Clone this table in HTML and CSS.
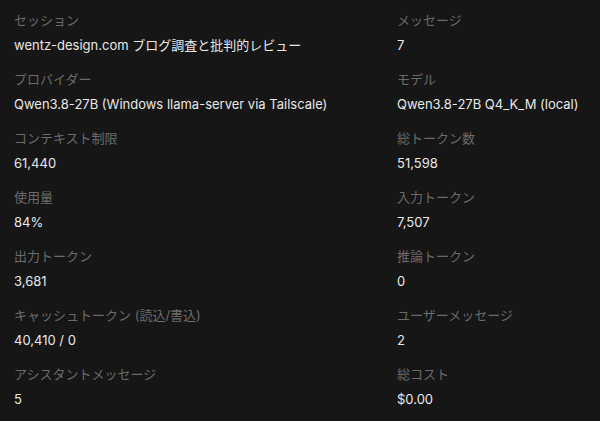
FILE: index.html
```html
<!DOCTYPE html>
<html lang="ja">
<head>
<meta charset="utf-8">
<link rel="stylesheet" href="styles.css">
</head>
<body>
<div class="stats">
  <div class="item"><div class="label">セッション</div><div class="value">wentz-design.com ブログ調査と批判的レビュー</div></div>
  <div class="item"><div class="label">メッセージ</div><div class="value">7</div></div>
  <div class="item"><div class="label">プロバイダー</div><div class="value">Qwen3.8-27B (Windows llama-server via Tailscale)</div></div>
  <div class="item"><div class="label">モデル</div><div class="value">Qwen3.8-27B Q4_K_M (local)</div></div>
  <div class="item"><div class="label">コンテキスト制限</div><div class="value">61,440</div></div>
  <div class="item"><div class="label">総トークン数</div><div class="value">51,598</div></div>
  <div class="item"><div class="label">使用量</div><div class="value">84%</div></div>
  <div class="item"><div class="label">入力トークン</div><div class="value">7,507</div></div>
  <div class="item"><div class="label">出力トークン</div><div class="value">3,681</div></div>
  <div class="item"><div class="label">推論トークン</div><div class="value">0</div></div>
  <div class="item"><div class="label">キャッシュトークン (読込/書込)</div><div class="value">40,410 / 0</div></div>
  <div class="item"><div class="label">ユーザーメッセージ</div><div class="value">2</div></div>
  <div class="item"><div class="label">アシスタントメッセージ</div><div class="value">5</div></div>
  <div class="item"><div class="label">総コスト</div><div class="value">$0.00</div></div>
</div>
</body>
</html>
```

FILE: styles.css
```css
html, body {
  margin: 0;
  padding: 0;
  background: #161616;
  height: 100%;
}
body {
  font-family: Inter, "Noto Sans CJK JP", sans-serif;
  font-size: 13px;
}
.stats {
  display: grid;
  grid-template-columns: 383px 1fr;
  row-gap: 16px;
  padding: 11px 14px 0 14px;
}
.item {
  display: flex;
  flex-direction: column;
  gap: 7px;
  white-space: nowrap;
}
.label {
  color: #6b6b6b;
  line-height: 18px;
}
.value {
  color: #e8e8e8;
  line-height: 18px;
}
```
